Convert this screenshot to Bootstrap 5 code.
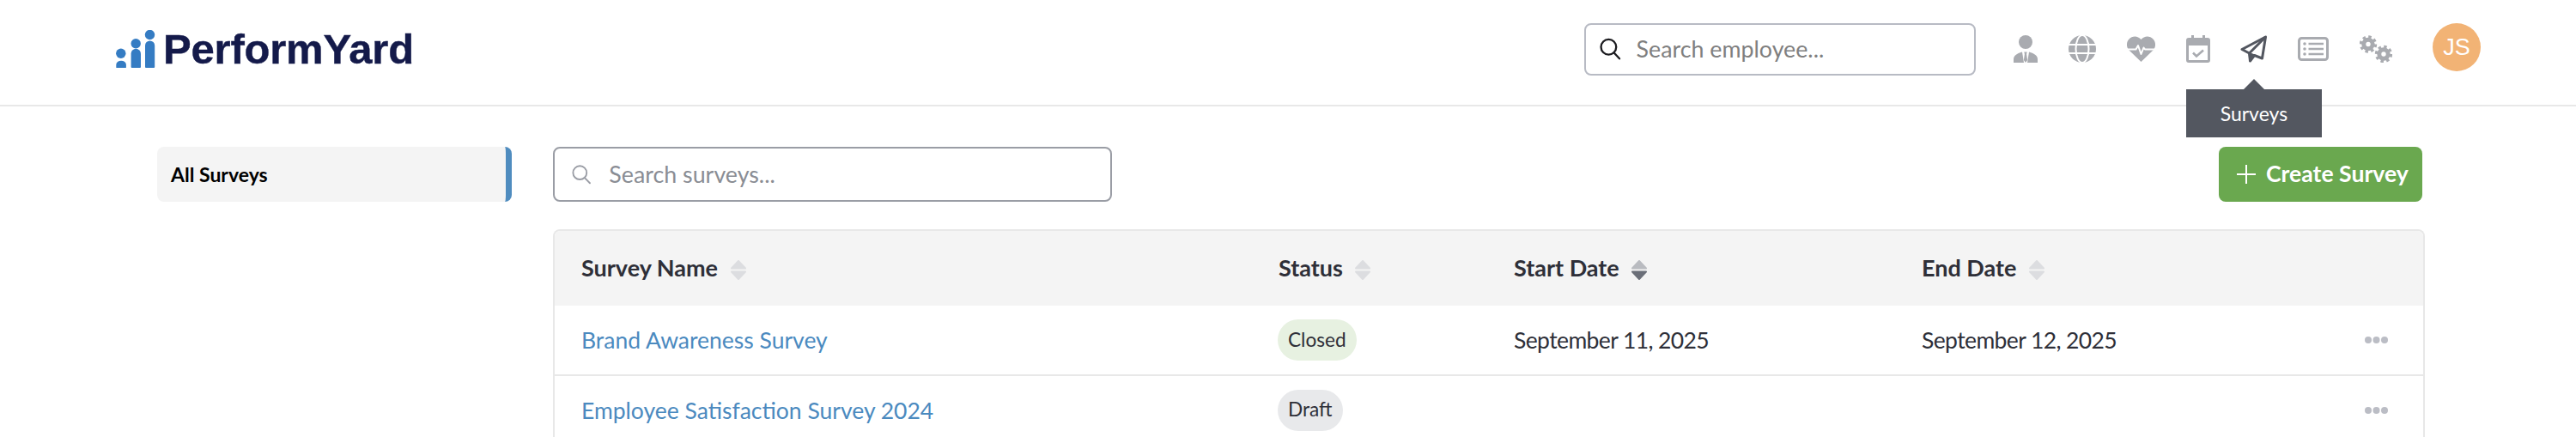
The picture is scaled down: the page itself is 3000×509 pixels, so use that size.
<!DOCTYPE html>
<html lang="en">
<head>
  <meta charset="UTF-8">
  <title>Surveys</title>
  <link href="https://cdn.jsdelivr.net/npm/bootstrap@5.3.2/dist/css/bootstrap.min.css" rel="stylesheet">
  <style>
    body { font-family: "Lato", "Noto Sans", sans-serif; color: #2e2f38; overflow: hidden; background: #fff; }

    /* top bar */
    .top-bar { height: 124px; padding: 0 111px 8px 135px; border-bottom: 2px solid #e8e8e8; }
    .brand-name { font-family: "Liberation Sans", Arial, sans-serif; font-weight: 700; font-size: 49px; letter-spacing: -.2px; color: #141a4a; margin-left: 9px; line-height: 1; -webkit-text-stroke: .4px #141a4a; }
    .emp-search { width: 456px; height: 61px; border: 2px solid #b8bbc4; border-radius: 8px; padding-left: 16px; margin-right: 44px; }
    .emp-search input, .survey-search input { border: 0; padding: 0; background: none; box-shadow: none; font-size: 26.8px; line-height: 1; }
    .emp-search input { margin-left: 18px; }
    .emp-search input::placeholder { color: #808080; }
    .survey-search input::placeholder { color: #8a8d94; }
    .nav-icons { gap: 35.8px; }
    .nav-slot { position: relative; line-height: 0; }
    .nav-tip { position: absolute; top: 63px; left: 50%; transform: translateX(-50%); width: 158px; height: 56px; background: #535760; color: #fff; font-size: 23px; line-height: 56px; text-align: center; z-index: 5; }
    .nav-tip::before { content: ""; position: absolute; top: -12px; left: 50%; margin-left: -12px; border: 12px solid transparent; border-top: 0; border-bottom-color: #535760; }
    .user-avatar { width: 56px; height: 56px; margin: 0 0 4px 47px; background: #f2b375; color: #fff; font-family: "Liberation Sans", Arial, sans-serif; font-size: 27px; }

    /* page body */
    .page-main { padding: 47px 0 0 183px; gap: 48px; }
    .side-nav { width: 413px; flex: none; }
    .side-item { height: 64px; padding-left: 16px; background: #f4f4f4; border-right: 7px solid #4f8cbf; border-radius: 8px; color: #000; font-weight: 700; font-size: 23px; text-decoration: none; }
    .survey-area { width: 2180px; flex: none; }
    .tools-row { height: 64px; margin-bottom: 32px; padding-right: 3px; }
    .survey-search { width: 651px; height: 64px; border: 2px solid #9a9da5; border-radius: 8px; padding-left: 20px; }
    .survey-search input { margin-left: 21px; }
    .create-btn { width: 237px; height: 64px; padding: 0 0 0 21px; gap: 12px; background: #6aa84f; border: 0; border-radius: 8px; color: #fff; font-size: 26.6px; font-weight: 700; }
    .create-btn:hover { background: #6aa84f; color: #fff; }

    /* table */
    .survey-box { border: 2px solid #e8e8e8; border-bottom: 0; border-radius: 8px 8px 0 0; overflow: hidden; }
    .survey-table { table-layout: fixed; width: 2176px; margin: 0; font-size: 26.5px; }
    .survey-table th, .survey-table td { padding: 0 0 0 31px; vertical-align: middle; color: #2e2f38; }
    .survey-table th { height: 87px; background: #f4f4f4; font-size: 27px; font-weight: 700; border-bottom: 0; }
    .survey-table td { height: 81px; border-bottom: 2px solid #e8e8e8; }
    .survey-table td.text-cell { padding-top: 2px; }
    .col-name { width: 812px; }
    .col-status { width: 274px; }
    .col-start { width: 475px; }
    .col-end { width: 420px; }
    .date-cell { letter-spacing: -.6px; }
    .sort-mark { margin-left: 8px; vertical-align: -4px; }
    .survey-link { color: #4b8abf; text-decoration: none; }
    .state-pill { height: 48px; margin-left: -1px; padding: 0 12px; display: inline-flex; align-items: center; color: #2e2f38; font-size: 22.6px; font-weight: 400; }
    .state-closed { background: #e7f1e1; }
    .state-draft { background: #e8e9eb; }
    .more-cell { text-align: right; padding-right: 41px !important; line-height: 0; }
  </style>
</head>
<body>

<header class="top-bar d-flex align-items-center">
  <svg width="46" height="44" viewBox="135 36 46 44" fill="#357cc3">
    <circle cx="140.8" cy="63.3" r="5.7"/>
    <path d="M135.3 79.5v-3.3a5.8 4.5 0 0 1 11.6 0v3.3a.6 .6 0 0 1-.6 .6h-10.4a.6 .6 0 0 1-.6-.6z"/>
    <circle cx="158.2" cy="51.7" r="5.7"/>
    <path d="M152.6 63.5a5.7 5.7 0 0 1 11.4 0v15.5a1 1 0 0 1-1 1h-9.4a1 1 0 0 1-1-1z"/>
    <circle cx="174.5" cy="41.5" r="5.7"/>
    <path d="M169 54a5.6 5.6 0 0 1 11.2 0v25a1 1 0 0 1-1 1h-9.2a1 1 0 0 1-1-1z"/>
  </svg>
  <span class="brand-name">PerformYard</span>

  <div class="emp-search d-flex align-items-center ms-auto">
    <svg width="27" height="28" viewBox="0 0 27 28" fill="none" stroke="#1c1c20" stroke-width="2.6" stroke-linecap="round">
      <circle cx="11.5" cy="11.5" r="9.8"/>
      <path d="M18.5 19 25.5 26.5"/>
    </svg>
    <input type="text" class="form-control" placeholder="Search employee...">
  </div>

  <div class="nav-icons d-flex align-items-center">
    <span class="nav-slot">
      <svg width="28" height="32" viewBox="0 0 28 32" fill="#a9abb0">
        <circle cx="14" cy="8" r="8"/>
        <path d="M0 32v-4c0-4 3.500-6.500 10-8.500l2 12.500z"/>
        <path d="M28 32v-4c0-4-3.500-6.500-10-8.500l-2 12.500z"/>
        <path d="M12.300 19.500h3.400l-.6 2.500 1 7-2.100 3-2.100-3 1-7z"/>
      </svg>
    </span>
    <span class="nav-slot">
      <svg width="32" height="32" viewBox="0 0 32 32">
        <circle cx="16" cy="16" r="16" fill="#a9abb0"/>
        <g fill="none" stroke="#fff" stroke-width="2">
          <ellipse cx="16" cy="16" rx="7.500" ry="16"/>
          <path d="M0 11h32M0 21h32"/>
        </g>
      </svg>
    </span>
    <span class="nav-slot">
      <svg width="33" height="30" viewBox="0 0 33 30">
        <path fill="#a9abb0" d="M16.500 30 2.500 16.500C-1 13-.8 7 2.500 3.500 6-.5 12.500-1 16.500 4 20.500-1 27-.5 30.500 3.500 33.800 7 34 13 30.500 16.500z"/>
        <path fill="none" stroke="#fff" stroke-width="2" stroke-linejoin="round" d="M0 15.500h10.500l2.500-4.500 3.500 10 3-7.500 1.500 2h12"/>
      </svg>
    </span>
    <span class="nav-slot">
      <svg width="28" height="32" viewBox="0 0 28 32" fill="#a9abb0">
        <path d="M6 0h3v4H6zM19 0h3v4h-3z"/>
        <path fill-rule="evenodd" d="M3 3h22a3 3 0 0 1 3 3v23a3 3 0 0 1-3 3H3a3 3 0 0 1-3-3V6a3 3 0 0 1 3-3zm0 9v17h22V12z"/>
        <path fill="none" stroke="#a9abb0" stroke-width="2.600" d="M8 20.500l4 4 8-7"/>
      </svg>
    </span>
    <span class="nav-slot">
      <svg width="31" height="32" viewBox="0 0 31 32" fill="none" stroke="#535760" stroke-width="3" stroke-linejoin="round">
        <path d="M29.500 2 2 16.500l8.500 4.500 1 9 5-6.500 9 3.500z"/>
        <path d="M29.500 2 10.500 21"/>
        <path fill="#535760" stroke-width="2" d="M10.500 21l1 9 5-6.500z"/>
      </svg>
      <span class="nav-tip">Surveys</span>
    </span>
    <span class="nav-slot">
      <svg width="36" height="28" viewBox="0 0 36 28">
        <rect x="1.500" y="1.500" width="33" height="25" rx="3" fill="none" stroke="#a9abb0" stroke-width="3"/>
        <g fill="#a9abb0">
          <circle cx="8" cy="8" r="1.800"/><circle cx="8" cy="14" r="1.800"/><circle cx="8" cy="20" r="1.800"/>
        </g>
        <path stroke="#a9abb0" stroke-width="2.600" d="M12.500 8H30M12.500 14H30M12.500 20H30"/>
      </svg>
    </span>
    <span class="nav-slot">
      <svg width="38" height="32" viewBox="0 0 38 32" fill="none" stroke="#a9abb0">
        <circle cx="10" cy="10.500" r="5.200" stroke-width="5"/>
        <circle cx="10" cy="10.500" r="8.500" stroke-width="3.400" stroke-dasharray="3.400 3.270"/>
        <circle cx="28" cy="22" r="5.200" stroke-width="5"/>
        <circle cx="28" cy="22" r="8.500" stroke-width="3.400" stroke-dasharray="3.400 3.270"/>
      </svg>
    </span>
  </div>

  <div class="user-avatar rounded-circle d-flex align-items-center justify-content-center">JS</div>
</header>

<main class="page-main d-flex">
  <nav class="side-nav">
    <a href="#" class="side-item d-flex align-items-center">All Surveys</a>
  </nav>

  <section class="survey-area">
    <div class="tools-row d-flex justify-content-between">
      <div class="survey-search d-flex align-items-center">
        <svg width="24" height="24" viewBox="0 0 24 24" fill="none" stroke="#9a9da5" stroke-width="2" stroke-linecap="round">
          <circle cx="10" cy="10" r="8.500"/>
          <path d="M16 16.500 22.500 23"/>
        </svg>
        <input type="text" class="form-control" placeholder="Search surveys...">
      </div>
      <button type="button" class="btn create-btn d-flex align-items-center">
        <svg width="22" height="22" viewBox="0 0 22 22" stroke="#fff" stroke-width="2"><path d="M11 0v22M0 11h22"/></svg>
        Create Survey
      </button>
    </div>

    <div class="survey-box">
      <table class="table survey-table">
        <colgroup>
          <col class="col-name"><col class="col-status"><col class="col-start"><col class="col-end"><col>
        </colgroup>
        <thead>
          <tr>
            <th>Survey Name
              <svg class="sort-mark" width="18" height="23" viewBox="0 0 18 23" stroke-width="2" stroke-linejoin="round"><path fill="#dcdde0" stroke="#dcdde0" d="M9 1 17 9.500H1z"/><path fill="#dcdde0" stroke="#dcdde0" d="M9 22 17 13.500H1z"/></svg>
            </th>
            <th>Status
              <svg class="sort-mark" width="18" height="23" viewBox="0 0 18 23" stroke-width="2" stroke-linejoin="round"><path fill="#dcdde0" stroke="#dcdde0" d="M9 1 17 9.500H1z"/><path fill="#dcdde0" stroke="#dcdde0" d="M9 22 17 13.500H1z"/></svg>
            </th>
            <th>Start Date
              <svg class="sort-mark" width="18" height="23" viewBox="0 0 18 23" stroke-width="2" stroke-linejoin="round"><path fill="#b9bbc0" stroke="#b9bbc0" d="M9 1 17 9.500H1z"/><path fill="#6b6f78" stroke="#6b6f78" d="M9 22 17 13.500H1z"/></svg>
            </th>
            <th>End Date
              <svg class="sort-mark" width="18" height="23" viewBox="0 0 18 23" stroke-width="2" stroke-linejoin="round"><path fill="#dcdde0" stroke="#dcdde0" d="M9 1 17 9.500H1z"/><path fill="#dcdde0" stroke="#dcdde0" d="M9 22 17 13.500H1z"/></svg>
            </th>
            <th></th>
          </tr>
        </thead>
        <tbody>
          <tr>
            <td class="text-cell"><a href="#" class="survey-link">Brand Awareness Survey</a></td>
            <td><span class="badge rounded-pill state-pill state-closed">Closed</span></td>
            <td class="text-cell date-cell">September 11, 2025</td>
            <td class="text-cell date-cell">September 12, 2025</td>
            <td class="more-cell">
              <svg width="27" height="10" viewBox="0 0 27 10" fill="#bbbdc5"><circle cx="4" cy="5" r="4"/><circle cx="13.500" cy="5" r="4"/><circle cx="23" cy="5" r="4"/></svg>
            </td>
          </tr>
          <tr>
            <td class="text-cell"><a href="#" class="survey-link">Employee Satisfaction Survey 2024</a></td>
            <td><span class="badge rounded-pill state-pill state-draft">Draft</span></td>
            <td></td>
            <td></td>
            <td class="more-cell">
              <svg width="27" height="10" viewBox="0 0 27 10" fill="#bbbdc5"><circle cx="4" cy="5" r="4"/><circle cx="13.500" cy="5" r="4"/><circle cx="23" cy="5" r="4"/></svg>
            </td>
          </tr>
        </tbody>
      </table>
    </div>
  </section>
</main>

</body>
</html>
